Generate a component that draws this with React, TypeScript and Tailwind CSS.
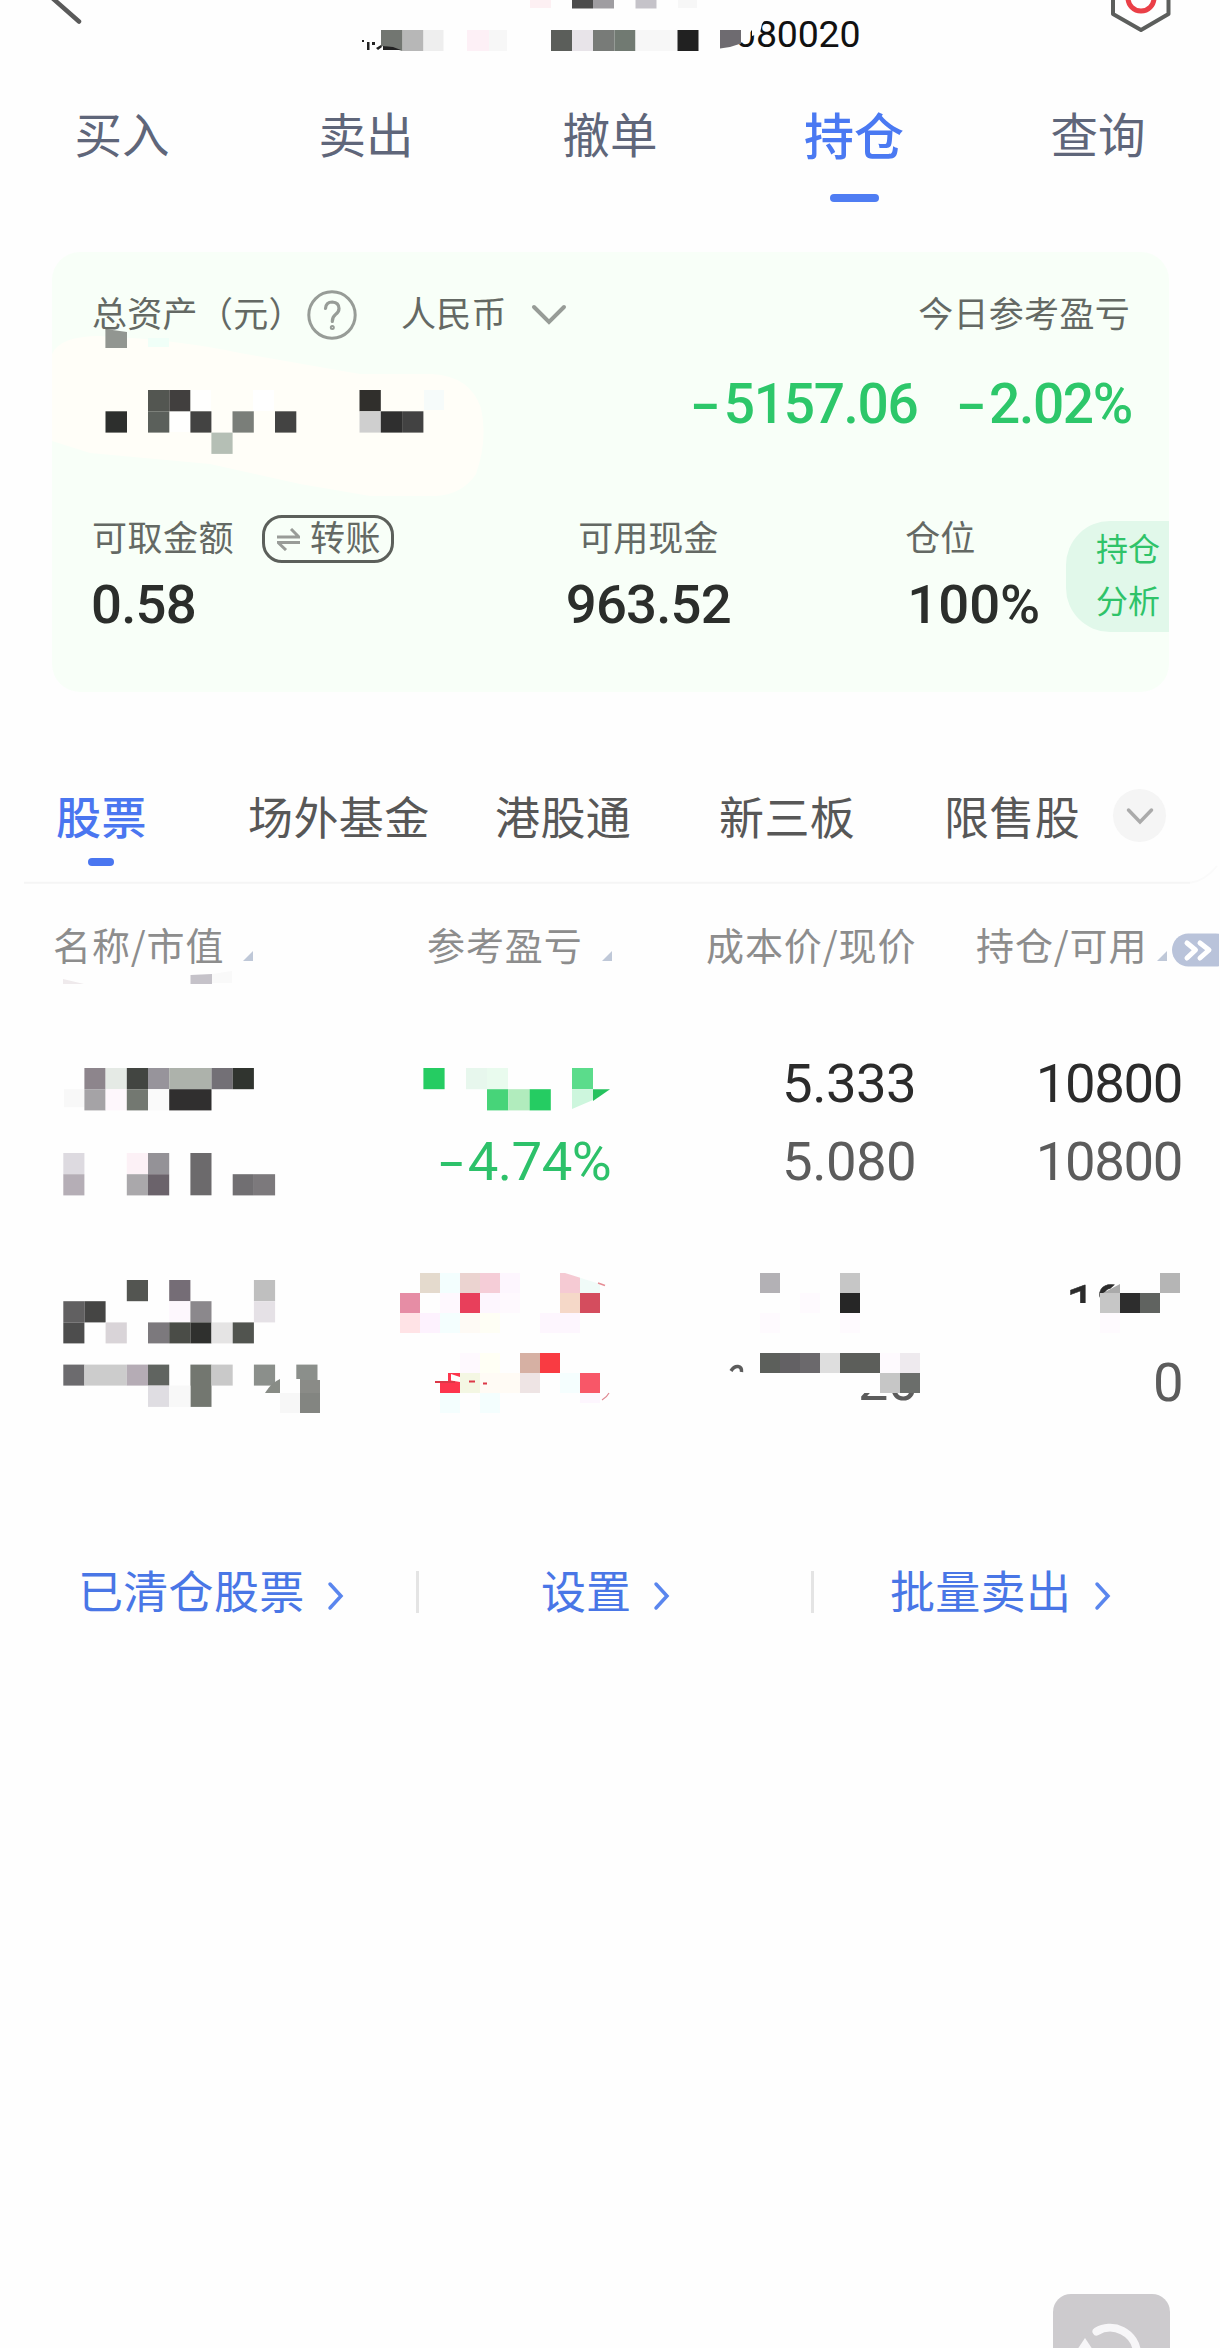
import type { ReactNode } from "react";

// x, y, width, height, colour
type Cell = [number, number, number, number, string];

const headerCells: Cell[] = [
    [530, 0, 21, 8, "#fdf0f3"], [572, 0, 21, 8.5, "#4c4c4c"], [593, 0, 21, 8.5, "#9f9da1"], [635.5, 0, 21, 8.5, "#c5c3c9"], [678, 0, 19, 8, "#f7f7f7"],
    [402.3, 30, 21.2, 21, "#b7b7b7"], [423.5, 30, 20, 21, "#eeeeee"], [467, 30, 22, 21, "#fdf0f6"], [489, 30, 18, 21, "#f7f7f7"],
    [551, 30, 21, 21, "#5b5e5a"], [572, 30, 21, 21, "#e8e4e9"], [593, 30, 21.5, 21, "#787b78"], [614.5, 30, 21, 21, "#717a72"],
    [635.5, 30, 42, 21, "#f7f7f7"], [677.5, 30, 21, 21, "#212121"],
];

const assetCells: Cell[] = [
    [148, 338, 21, 9, "#f0fff8"],
    [190, 390, 21, 21, "#fffffe"], [253, 390, 21, 21, "#ffffff"], [169.5, 411, 21, 21, "#fffffe"], [424, 390, 20, 20, "#f6fbfa"],
    [148, 390, 21.3, 21.3, "#535651"], [169.3, 390, 21, 21.3, "#413f3e"], [359.5, 390, 21.3, 21.3, "#302f2c"],
    [105.5, 411.3, 21.5, 21.3, "#2d2f2d"], [148, 411.3, 21.3, 21.3, "#5b605b"], [190.4, 411.3, 21, 21.3, "#434342"],
    [232.5, 411.3, 21.3, 21.3, "#7a7e79"], [275, 411.3, 21.3, 21.3, "#434342"], [211.4, 432.6, 21.2, 21.3, "#b5bfb5"],
    [359.5, 411.3, 21.3, 21.3, "#cfcfcf"], [380.8, 411.3, 21.3, 21.3, "#2f2f2f"], [402.1, 411.3, 21.3, 21.3, "#424242"],
];

const firstNameCells: Cell[] = [
    [84.4, 1068, 21.2, 21.2, "#8d858c"], [105.6, 1068, 21.2, 21.2, "#e5eae5"], [126.8, 1068, 21.2, 21.2, "#424541"], [148, 1068, 21.2, 21.2, "#97949b"],
    [169.2, 1068, 42.3, 21.2, "#adb2ab"], [211.5, 1068, 21.2, 21.2, "#737076"], [232.7, 1068, 21.2, 21.2, "#30342f"],
    [64, 1089.2, 20.4, 18, "#f8f8f8"], [84.4, 1089.2, 21.2, 21.2, "#a5a3a6"], [105.6, 1089.2, 21.2, 21.2, "#fef7fc"], [126.8, 1089.2, 21.2, 21.2, "#737871"],
    [148, 1089.2, 21.2, 21.2, "#fafafa"], [169.2, 1089.2, 42.3, 21.2, "#302f2f"],
    [63.3, 1153, 21.1, 21.2, "#dddae0"], [126.8, 1153, 21.2, 21.2, "#fcf1f6"], [148, 1153, 21.2, 21.2, "#949297"], [190.4, 1153, 21.1, 42.3, "#6c6a6c"],
    [63.3, 1174.2, 21.1, 21.2, "#b5aeb6"], [126.8, 1174.2, 21.2, 21.2, "#aaa8ab"], [148, 1174.2, 21.2, 21.2, "#6b636b"],
    [232.7, 1174.2, 21.2, 21.2, "#716f72"], [253.9, 1174.2, 21.2, 21.2, "#7c797c"],
];

const firstProfitCells: Cell[] = [
    [423.4, 1068, 21.2, 21.2, "#25cc62"], [466, 1068, 21, 21.2, "#e7f7ed"], [487, 1068, 21, 21.2, "#e9fbee"], [572, 1068, 21, 21.2, "#5bdc8b"],
    [487, 1089.2, 21.3, 21.2, "#47d479"], [508.3, 1089.2, 21.3, 21.2, "#b1ecbd"], [529.6, 1089.2, 21.2, 21.2, "#25cc62"],
];

const secondNameCells: Cell[] = [
    [126.8, 1280, 21.2, 21.2, "#535551"], [169.2, 1280, 21.2, 21.2, "#756d76"], [253.9, 1280, 21.2, 21.2, "#bfbfbf"],
    [63.3, 1301.2, 21.1, 21.2, "#616061"], [84.4, 1301.2, 21.2, 21.2, "#454544"], [169.2, 1301.2, 21.2, 21.2, "#fdf7fd"],
    [190.4, 1301.2, 21.1, 21.2, "#8b888c"], [253.9, 1301.2, 21.2, 21.2, "#e5e1e6"],
    [63.3, 1322.4, 21.1, 21, "#4d4d4d"], [105.6, 1322.4, 21.2, 21, "#d9d4d8"], [148, 1322.4, 21.2, 21, "#7c797d"], [169.2, 1322.4, 21.2, 21, "#4a4c47"],
    [190.4, 1322.4, 21.1, 21, "#2f302e"], [211.5, 1322.4, 21.2, 21, "#e5e4e4"], [232.7, 1322.4, 21.2, 21, "#51544f"],
    [63.3, 1364.6, 21.1, 21, "#6c6b6e"], [84.4, 1364.6, 42.4, 21, "#cccccc"], [126.8, 1364.6, 21.2, 21, "#b5acb5"], [148, 1364.6, 21.2, 21, "#606460"],
    [190.4, 1364.6, 21.1, 42.3, "#737770"], [211.5, 1364.6, 21.2, 21, "#c9c9c9"], [253.9, 1364.6, 21.2, 21, "#8b8f8b"], [296.3, 1364.6, 21.2, 16, "#8b8f8b"],
    [148, 1385.6, 21.2, 21.3, "#dfdde2"], [169.2, 1385.6, 21.2, 21.3, "#f8f8f8"],
    [280, 1379, 20, 14, "#fefefe"], [300, 1380, 20, 13, "#8a8b87"], [280, 1393, 20, 20, "#f7f7f7"], [300, 1393, 20, 20, "#838581"],
];

const secondProfitCells: Cell[] = [
    [420, 1273, 20, 20, "#e4dacd"], [440, 1273, 20, 20, "#f3fefe"], [460, 1273, 20, 20, "#ebd3d0"], [480, 1273, 20, 20, "#f5cdd7"], [500, 1273, 20, 20, "#fdf6fe"],
    [560, 1273, 20, 20, "#f5cad3"], [580, 1273, 20, 20, "#f0fbf8"],
    [400, 1293, 20, 20, "#e68da5"], [440, 1293, 20, 20, "#fef8fe"], [460, 1293, 20, 20, "#e83f5b"], [480, 1293, 20, 20, "#fdf6fe"], [500, 1293, 20, 20, "#fef9fe"],
    [560, 1293, 20, 20, "#f5d8c8"], [580, 1293, 20, 20, "#d44d5e"],
    [400, 1313, 20, 20, "#ffe3e6"], [420, 1313, 20, 20, "#fdf2fe"], [440, 1313, 20, 20, "#f4fefe"], [460, 1313, 20, 20, "#fefaf5"], [480, 1313, 20, 20, "#fefef5"], [540, 1313, 40, 20, "#fdf6fe"],
    [460, 1353, 20, 20, "#fef9fe"], [480, 1353, 20, 20, "#fffff5"], [520, 1353, 20, 20, "#d6b0a3"], [540, 1353, 20, 20, "#f93b42"],
    [440, 1373, 20, 20, "#fd354d"], [460, 1373, 20, 20, "#f4f7e3"], [480, 1373, 40, 20, "#fffbf5"], [520, 1373, 20, 20, "#eee4e4"],
    [560, 1373, 20, 20, "#f5fefe"], [580, 1373, 20, 20, "#f85768"],
    [440, 1393, 20, 20, "#f4fefe"], [480, 1393, 20, 20, "#f4fefe"], [580, 1393, 20, 10, "#fdf6fe"],
];

const secondPriceCells: Cell[] = [
    [760, 1273, 20, 20, "#b3b1b5"], [840, 1273, 20, 20, "#c6c6c6"], [800, 1293, 20, 20, "#fefafe"], [840, 1293, 20, 20, "#262626"],
    [760, 1313, 20, 20, "#fefafe"], [840, 1313, 20, 20, "#fefafe"],
    [760, 1353, 20, 20, "#5c5f5b"], [780, 1353, 20, 20, "#636164"], [800, 1353, 20, 20, "#6b696c"], [820, 1353, 20, 20, "#dedede"],
    [840, 1353, 40, 20, "#5c5e5a"], [880, 1353, 20, 20, "#fefafe"], [900, 1353, 20, 20, "#eeeaee"],
    [880, 1373, 20, 20, "#c6c6c6"], [900, 1373, 20, 20, "#6b6e6b"],
];

const secondHoldingCells: Cell[] = [
    [1160, 1273, 20, 20, "#b5b5b5"], [1100, 1293, 20, 20, "#c6c6c6"], [1120, 1293, 20, 20, "#2d2d2d"], [1140, 1293, 20, 20, "#606360"], [1100, 1313, 20, 20, "#fefafe"],
];

// blocks that hide private values
function Mosaic({ box, cells, className = "", before, children }: { box: [number, number, number, number]; cells: Cell[]; className?: string; before?: ReactNode; children?: ReactNode }) {
    return (
        <svg viewBox={box.join(" ")} width={box[2]} height={box[3]} className={`shrink-0 ${className}`}>
            {before}
            {cells.map(([x, y, w, h, fill]) => (
                <rect key={`${x}-${y}`} x={x} y={y} width={w} height={h} fill={fill} />
            ))}
            {children}
        </svg>
    );
}

function Minus() {
    return <span className="mr-[5px] inline-block origin-right scale-x-[1.6]">-</span>;
}

function Header() {
    return (
        <header className="flex h-[60px]">
            <svg viewBox="0 0 340 60" width="340" height="60" className="shrink-0">
                <path d="M50 -4 L79 21.5" stroke="#5a5a5a" strokeWidth="4.5" strokeLinecap="round" />
            </svg>
            <Mosaic
                box={[340, 0, 540, 60]}
                cells={headerCells}
                before={
                    <>
                        <text x="735" y="47.3" fontFamily="Roboto" fontSize="37.5" letterSpacing="-0.2" fill="#111">080020</text>
                        <path d="M730 15 H768 L762 24 L760 33 L752 36 L752 30 L741 43 L730 50 Z" fill="#fefefe" />
                    </>
                }
            >
                <path d="M381 30 H402.3 V51 L392 48 L381 46 Z" fill="#727671" />
                <path d="M720 30 H741 V43.5 L730 47 L720 48.5 Z" fill="#6e6b70" />
                <path d="M362 40 h2 v2 h-2z M367 42 h2.5 v8 h-2.5z M372 42 h3 v3 h-3z M376 48 l5 -3 l1 2 l-4 3z M383 46 l10 1 l8 3 h-18z" fill="#222" />
            </Mosaic>
            <svg viewBox="880 0 340 60" width="340" height="60" fill="none" className="shrink-0">
                <path d="M1113 -4 V14 L1141 30 L1168.5 14 V-4" stroke="#5c5e5c" strokeWidth="4" strokeLinejoin="round" />
                <circle cx="1141" cy="-2" r="13" stroke="#ea3f47" strokeWidth="5" />
            </svg>
        </header>
    );
}

function MainTabs() {
    const tabs = ["买入", "卖出", "撤单", "持仓", "查询"];
    return (
        <nav className="grid h-[192px] grid-cols-5 pt-[49px]">
            {tabs.map((tab) =>
                tab === "持仓" ? (
                    <div key={tab} className="flex flex-col items-center">
                        <span className="h-12 text-[50px] leading-[48px] font-medium text-[#4a79f2]">{tab}</span>
                        <span className="mt-[37px] h-2 w-[49px] rounded-full bg-[#4f7df3]" />
                    </div>
                ) : (
                    <div key={tab} className="text-center text-[47.5px] leading-[48px] text-[#5f667a]">{tab}</div>
                )
            )}
        </nav>
    );
}

function AssetCard() {
    return (
        <section className="relative ml-[52px] h-[440px] w-[1117px] overflow-hidden rounded-[28px] bg-[#f8fff8] pt-[38px] text-[35px] leading-none text-[#646964]">
            <Mosaic
                box={[52, 252, 480, 260]}
                cells={assetCells}
                className="absolute top-0 left-0"
                before={<path d="M52 354 Q60 336 100 336 Q180 340 240 353 L360 374 H432 Q470 376 481 408 Q488 440 476 474 Q462 495 435 496 H370 L300 484 L210 464 L90 453 L52 441 Z" fill="#fffef8" />}
            >
                <path d="M105.4 329 L127 332 V348 H105.4 Z" fill="#929691" />
            </Mosaic>
            <div className="relative flex h-[50px] items-center pr-[39px] pl-[40px] tracking-[0.3px]">
                <span className="-mt-[7px] w-[215px] whitespace-nowrap">总资产（元）</span>
                <svg viewBox="0 0 50 50" className="size-[50px]" fill="none" stroke="#979c97" strokeWidth="3">
                    <circle cx="25" cy="25" r="23.2" />
                    <path d="M18.5 18.5 Q19 12 25.3 12 Q32 12.5 32 18.5 Q32 22 28.5 24.5 Q25.3 27 25.3 31.5" strokeWidth="3.2" strokeLinecap="round" />
                    <circle cx="25.3" cy="37.5" r="1" />
                </svg>
                <span className="-mt-[7px] ml-[44px]">人民币</span>
                <svg viewBox="0 0 36 24" className="ml-[24px] h-6 w-9" fill="none" stroke="#979c97" strokeWidth="4" strokeLinecap="round">
                    <path d="M3 4 L18 19 L33 4" />
                </svg>
                <span className="-mt-[7px] ml-auto">今日参考盈亏</span>
            </div>
            <div className="relative mt-[39px] flex h-[50px] items-center justify-end gap-[49px] pr-[37px] font-['Roboto'] text-[55px] font-medium tracking-[-1.3px] text-[#2dc76a]">
                <span><Minus />5157.06</span>
                <span><Minus />2.02%</span>
            </div>
            <div className="relative mt-[86px] flex pl-[40px]">
                <div className="w-[434px]">
                    <div className="flex h-12 items-center tracking-[0.5px]">
                        <span className="-mt-[7px]">可取金额</span>
                        <span className="ml-[28px] flex h-12 w-[132px] items-center rounded-[20px] border-[3px] border-[#5c605b] pl-3">
                            <svg viewBox="0 0 23 23" className="size-[23px]" fill="none" stroke="#999c98" strokeWidth="3">
                                <path d="M0 9 H22 L14 1 M23 14.5 H1 L9 22" />
                            </svg>
                            <span className="-mt-[7px] ml-[10px] whitespace-nowrap">转账</span>
                        </span>
                    </div>
                    <div className="mt-[16px] -ml-px h-[50px] font-['Roboto'] text-[54.5px] leading-[50px] font-medium tracking-[-0.8px] text-[#2b2e2b]">0.58</div>
                </div>
                <div className="w-[246px] text-center">
                    <div className="h-12 leading-[42px]">可用现金</div>
                    <div className="mt-[16px] h-[50px] font-['Roboto'] text-[54.5px] leading-[50px] font-medium tracking-[-0.8px] text-[#2b2e2b]">963.52</div>
                </div>
                <div className="ml-[134px] w-[161px]">
                    <div className="h-12 leading-[42px]">仓位</div>
                    <div className="mt-[16px] ml-[2px] h-[50px] font-['Roboto'] text-[54.5px] leading-[50px] font-medium text-[#2b2e2b]">100%</div>
                </div>
                <div className="mt-[6px] h-[111px] w-[103px] shrink-0 rounded-l-[44px] bg-[#e1f8ea] pl-[30px] text-[32px] leading-[52px] text-[#2fc369]">
                    <div>持仓</div>
                    <div>分析</div>
                </div>
            </div>
        </section>
    );
}

function MarketTabs() {
    return (
        <div className="mt-[84px] flex h-[106px] items-start pl-[56px] text-[45px] leading-[80px] text-[#575757] tracking-[0.4px]">
            <div className="flex w-[192px] flex-col">
                <span className="h-20 font-medium text-[#4a76f0]">股票</span>
                <span className="mt-[2px] ml-8 h-2 w-[26px] rounded-full bg-[#4a76f0]" />
            </div>
            <span className="w-[247px]">场外基金</span>
            <span className="w-[224px]">港股通</span>
            <span className="w-[225px]">新三板</span>
            <span className="w-[169px]">限售股</span>
            <span className="mt-[13px] flex size-[53px] items-center justify-center rounded-full bg-[#f5f5f5]">
                <svg viewBox="0 0 28 18" width="28" height="18" fill="none" stroke="#aaaaaa" strokeWidth="3.5" strokeLinecap="round">
                    <path d="M2.5 3 L14 15 L25.5 3" />
                </svg>
            </span>
        </div>
    );
}

function SortMark() {
    return (
        <svg viewBox="0 0 10 10" width="10" height="10" className="mt-[18px]">
            <path d="M10 0 V10 H0 Z" fill="#bfc8d8" />
        </svg>
    );
}

function TableHead() {
    return (
        <div className="flex h-[104px] flex-col">
            <svg viewBox="0 863 1220 20" width="1220" height="20" className="-mt-[18px] shrink-0" fill="none" stroke="#f5f5f5" strokeWidth="2">
                <path d="M24 881.7 H1190" />
                <path d="M1190 881.7 Q1205 880 1217 865" stroke="#fafafa" />
            </svg>
            <div className="mt-[38px] flex h-[50px] items-center pl-[53px] text-[38px] leading-[50px] whitespace-nowrap text-[#8d8d8d] tracking-[0.9px]">
                <span className="-mt-[7px] w-[190px]">名称/市值</span>
                <SortMark />
                <span className="-mt-[7px] ml-[174px] w-[175px]">参考盈亏</span>
                <SortMark />
                <span className="-mt-[7px] ml-[94px] w-[270px]">成本价/现价</span>
                <span className="-mt-[7px] w-[181px]">持仓/可用</span>
                <SortMark />
                <svg viewBox="1173 933 47 34" width="47" height="34" className="mt-[5px] ml-[5px]">
                    <rect x="1173" y="933.5" width="60" height="33" rx="16.5" fill="#b9c3da" />
                    <path d="M1188 943 L1196.5 950 L1188 958 M1201 943 L1210 950 L1201 958" fill="none" stroke="#fff" strokeWidth="5" strokeLinecap="round" strokeLinejoin="round" />
                </svg>
            </div>
            <svg viewBox="0 970 400 15" width="400" height="15" className="-mt-[1px] shrink-0">
                <path d="M63 978 L84 983 H63 Z" fill="#efeaec" />
                <path d="M190.5 974 L212 973 V983 H190.5 Z" fill="#c5c2c9" />
                <path d="M212 973 L232 970 V982 H212 Z" fill="#f9f9f9" />
            </svg>
        </div>
    );
}

function Holdings() {
    return (
        <div className="font-['Roboto'] text-[54.5px] leading-[78px] tracking-[-0.6px]">
            <div className="flex h-[212px]">
                <Mosaic box={[0, 1043, 400, 170]} cells={firstNameCells} />
                <div className="flex w-[211px] flex-col items-end text-[#2dc16a]">
                    <Mosaic box={[400, 1043, 211, 79]} cells={firstProfitCells}>
                        <path d="M572 1089.2 H593 V1100 L572 1109 Z" fill="#cdf6dd" />
                        <path d="M593 1089.2 H610 L593 1101 Z" fill="#25c25e" />
                    </Mosaic>
                    <span><Minus />4.74%</span>
                </div>
                <div className="w-[305px] pt-px text-right text-[#5c5c5c]">
                    <div className="text-[#2b2b2b]">5.333</div>
                    <div>5.080</div>
                </div>
                <div className="w-[266px] pt-px text-right tracking-[-1.4px] text-[#5c5c5c]">
                    <div className="text-[#2b2b2b]">10800</div>
                    <div>10800</div>
                </div>
            </div>
            <div className="flex h-[212px]">
                <Mosaic box={[0, 1255, 380, 170]} cells={secondNameCells}>
                    <path d="M265 1393 Q271 1383 280 1379 V1393 Z" fill="#888c86" />
                </Mosaic>
                <Mosaic box={[380, 1255, 240, 170]} cells={secondProfitCells}>
                    <path d="M565 1273 H600 V1284 Z" fill="#fefefe" />
                    <path d="M598 1283 L605 1285.5" stroke="#e68d95" strokeWidth="1.5" />
                    <path d="M440 1373 H448 V1381 H440 Z M451 1374 L460 1377 V1382 L451 1380.5 Z" fill="#fefefe" />
                    <path d="M435 1382 H455 M469 1381.5 H475 M483 1383.5 H487" stroke="#dc3848" strokeWidth="2.2" />
                    <path d="M602 1400 Q607 1397 609 1393" fill="none" stroke="#e08a92" strokeWidth="1.2" />
                </Mosaic>
                <Mosaic
                    box={[620, 1255, 320, 170]}
                    cells={secondPriceCells}
                    before={
                        <>
                            <clipPath id="price-rest"><path d="M855 1393 H915 V1405 H855 Z" /></clipPath>
                            <text x="858" y="1400" fontFamily="Roboto" fontSize="54" letterSpacing="-0.3" fill="#5c5c5c" clipPath="url(#price-rest)">20</text>
                        </>
                    }
                >
                    <path d="M731 1371 Q734 1366 738 1366.5 Q742 1367 741.5 1372" fill="none" stroke="#5c5c5c" strokeWidth="3.5" />
                </Mosaic>
                <div className="w-[243px] text-right text-[#5c5c5c]">
                    <Mosaic
                        box={[940, 1255, 243, 88]}
                        cells={secondHoldingCells}
                        before={
                            <>
                                <clipPath id="holding-rest"><path d="M1060 1280 H1120 L1100 1298 V1303 H1060 Z" /></clipPath>
                                <text x="1066" y="1323" fontFamily="Roboto" fontSize="54" fill="#2b2b2b" stroke="#2b2b2b" strokeWidth="0.5" clipPath="url(#holding-rest)">18</text>
                            </>
                        }
                    >
                        <path d="M1103 1293 L1120 1284 V1293 Z" fill="#aaaaaa" />
                    </Mosaic>
                    <div>0</div>
                </div>
            </div>
        </div>
    );
}

function Arrow() {
    return (
        <svg viewBox="0 0 18 30" width="18" height="30" className="mt-2" fill="none" stroke="#5a86ee" strokeWidth="3.5" strokeLinecap="round">
            <path d="M4 3 L15 15 L4 27" />
        </svg>
    );
}

function FooterLinks() {
    return (
        <div className="mt-[98px] flex h-[54px] items-center pl-[78px] text-[45px] leading-[54px] whitespace-nowrap text-[#4976e6]">
            <span className="-mt-1 w-[248px] tracking-[0.3px]">已清仓股票</span>
            <Arrow />
            <span className="ml-[72px] h-[42px] w-[3px] bg-[#e4e4e4]" />
            <span className="-mt-1 ml-[122px] w-[111px]">设置</span>
            <Arrow />
            <span className="ml-[141px] h-[42px] w-[3px] bg-[#e4e4e4]" />
            <span className="-mt-1 ml-[76px] w-[203px] tracking-[0.3px]">批量卖出</span>
            <Arrow />
        </div>
    );
}

export default function App() {
    return (
        <main className="flex h-[2348px] w-[1220px] flex-col overflow-hidden bg-[#fefefe] font-['Noto_Sans_CJK_SC',sans-serif]">
            <Header />
            <MainTabs />
            <AssetCard />
            <MarketTabs />
            <TableHead />
            <div className="mt-[57px]">
                <Holdings />
            </div>
            <FooterLinks />
            <button className="mt-auto ml-[1053px] h-[54px] w-[117px] rounded-t-[18px] bg-[#cdcbce]">
                <svg viewBox="1053 2294 117 54" width="117" height="54" fill="none">
                    <path d="M1096.5 2331.5 A27 27 0 0 1 1137 2352" stroke="#f7f6f8" strokeWidth="8" strokeLinecap="round" />
                    <path d="M1085 2338 L1097 2356 H1073 Z" fill="#f7f6f8" />
                </svg>
            </button>
        </main>
    );
}
